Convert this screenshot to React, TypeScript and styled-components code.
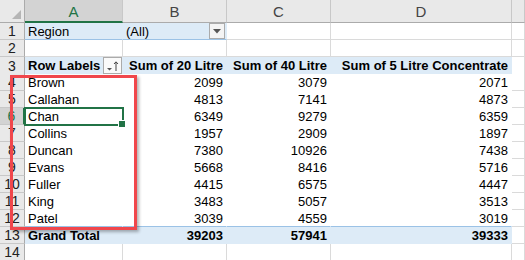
import React from "react";
import styled, { createGlobalStyle, css } from "styled-components";

const GlobalStyle = createGlobalStyle`
  body {
    margin: 0;
    background: #ffffff;
    font-family: "Liberation Sans", Arial, sans-serif;
  }
`;

const COLS = "25px 98px 104px 104px 181px 1fr";
const GRID = "#dadada";
const BLUE_FILL = "#ddebf7";
const BLUE_LINE = "#9bc2e6";
const GREEN = "#217346";

const Sheet = styled.div`
  position: relative;
  width: 525px;
  height: 260px;
  overflow: hidden;
  font-size: 13px;
  color: #000;
`;

const HeaderRow = styled.div`
  display: grid;
  grid-template-columns: ${COLS};
  height: 23px;
`;

const ColHead = styled.div<{ $selected?: boolean; $corner?: boolean }>`
  position: relative;
  box-sizing: border-box;
  display: flex;
  align-items: center;
  justify-content: center;
  background: ${(p) => (p.$selected ? "#d3d3d3" : "#e9e9e9")};
  border-right: 1px solid #c8c8c8;
  border-bottom: ${(p) => (p.$selected ? `2px solid ${GREEN}` : "1px solid #ababab")};
  color: ${(p) => (p.$selected ? GREEN : "#444")};
  font-size: 15px;
  padding-top: 1px;
  ${(p) =>
    p.$corner &&
    css`
      border-right-color: #ababab;
    `}
`;

const CornerMark = styled.svg`
  position: absolute;
  right: 3px;
  bottom: 3px;
`;

const Row = styled.div`
  display: grid;
  grid-template-columns: ${COLS};
  height: 17px;
`;

const RowHead = styled.div<{ $selected?: boolean }>`
  box-sizing: border-box;
  display: flex;
  align-items: center;
  justify-content: center;
  background: ${(p) => (p.$selected ? "#d3d3d3" : "#e9e9e9")};
  border-right: ${(p) => (p.$selected ? `2px solid ${GREEN}` : "1px solid #ababab")};
  border-bottom: 1px solid #c8c8c8;
  color: ${(p) => (p.$selected ? GREEN : "#222")};
  font-size: 14px;
`;

type CellProps = {
  $right?: boolean;
  $bold?: boolean;
  $fill?: boolean;
  $plain?: boolean;
  $blueBottom?: boolean;
  $active?: boolean;
};

const Cell = styled.div<CellProps>`
  position: relative;
  box-sizing: border-box;
  display: flex;
  align-items: center;
  justify-content: ${(p) => (p.$right ? "flex-end" : "space-between")};
  padding: 0 3px 0 3px;
  white-space: nowrap;
  font-weight: ${(p) => (p.$bold ? 700 : 400)};
  background: ${(p) => (p.$fill ? BLUE_FILL : "#fff")};
  border-right: 1px solid ${(p) => (p.$plain || p.$fill ? "transparent" : GRID)};
  border-bottom: 1px solid
    ${(p) => (p.$blueBottom ? BLUE_LINE : p.$plain || p.$fill ? "transparent" : GRID)};
  ${(p) =>
    p.$active &&
    css`
      z-index: 2;
      outline: 2px solid ${GREEN};
      outline-offset: -1px;
      &::after {
        content: "";
        position: absolute;
        right: -4px;
        bottom: -4px;
        width: 6px;
        height: 6px;
        background: ${GREEN};
        border: 1px solid #fff;
      }
    `}
`;

const DropButton = styled.div`
  box-sizing: border-box;
  width: 16px;
  height: 16px;
  margin-right: -2px;
  border: 1px solid #ababab;
  background: #f4f4f4;
  display: flex;
  align-items: center;
  justify-content: center;
`;

const FilterButton = styled(DropButton)`
  width: 19px;
  height: 17px;
  background: #fafafa;
  margin-right: -3px;
`;

const Highlight = styled.div`
  position: absolute;
  left: 10px;
  top: 75px;
  width: 127px;
  height: 155px;
  box-sizing: border-box;
  border: 3px solid #f0474c;
  box-shadow: 2px 2px 3px rgba(0, 0, 0, 0.3);
  z-index: 5;
  pointer-events: none;
`;

const data: [string, number, number, number][] = [
  ["Brown", 2099, 3079, 2071],
  ["Callahan", 4813, 7141, 4873],
  ["Chan", 6349, 9279, 6359],
  ["Collins", 1957, 2909, 1897],
  ["Duncan", 7380, 10926, 7438],
  ["Evans", 5668, 8416, 5716],
  ["Fuller", 4415, 6575, 4447],
  ["King", 3483, 5057, 3513],
  ["Patel", 3039, 4559, 3019],
];

const DownTriangle = () => (
  <svg width="8" height="5" viewBox="0 0 8 5">
    <path d="M0 0h8L4 4.5z" fill="#555" />
  </svg>
);

const SortIcon = () => (
  <svg width="14" height="12" viewBox="0 0 14 12">
    <path d="M1 8h5L3.5 10.5z" fill="#555" />
    <path d="M10 11V2M8 4l2-2.2L12 4" stroke="#444" strokeWidth="1" fill="none" />
  </svg>
);

export default function App() {
  return (
    <Sheet>
      <GlobalStyle />
      <HeaderRow>
        <ColHead $corner>
          <CornerMark width="9" height="9" viewBox="0 0 9 9">
            <path d="M9 0v9H0z" fill="#b5b5b5" />
          </CornerMark>
        </ColHead>
        <ColHead $selected>A</ColHead>
        <ColHead>B</ColHead>
        <ColHead>C</ColHead>
        <ColHead>D</ColHead>
        <ColHead />
      </HeaderRow>

      <Row>
        <RowHead>1</RowHead>
        <Cell $fill $blueBottom>Region</Cell>
        <Cell $fill $blueBottom>
          (All)
          <DropButton>
            <DownTriangle />
          </DropButton>
        </Cell>
        <Cell />
        <Cell />
        <Cell />
      </Row>

      <Row>
        <RowHead>2</RowHead>
        <Cell />
        <Cell />
        <Cell />
        <Cell />
        <Cell />
      </Row>

      <Row>
        <RowHead>3</RowHead>
        <Cell $fill $bold $blueBottom>
          Row Labels
          <FilterButton>
            <SortIcon />
          </FilterButton>
        </Cell>
        <Cell $fill $bold $blueBottom $right>Sum of 20 Litre</Cell>
        <Cell $fill $bold $blueBottom $right>Sum of 40 Litre</Cell>
        <Cell $fill $bold $blueBottom $right>Sum of 5 Litre Concentrate</Cell>
        <Cell />
      </Row>

      {data.map(([name, a, b, c], i) => {
        const last = i === data.length - 1;
        return (
          <Row key={name}>
            <RowHead $selected={i === 2}>{i + 4}</RowHead>
            <Cell $plain $blueBottom={last} $active={i === 2}>{name}</Cell>
            <Cell $plain $blueBottom={last} $right>{a}</Cell>
            <Cell $plain $blueBottom={last} $right>{b}</Cell>
            <Cell $plain $blueBottom={last} $right>{c}</Cell>
            <Cell />
          </Row>
        );
      })}

      <Row>
        <RowHead>13</RowHead>
        <Cell $fill $bold>Grand Total</Cell>
        <Cell $fill $bold $right>39203</Cell>
        <Cell $fill $bold $right>57941</Cell>
        <Cell $fill $bold $right>39333</Cell>
        <Cell />
      </Row>

      <Row>
        <RowHead>14</RowHead>
        <Cell />
        <Cell />
        <Cell />
        <Cell />
        <Cell />
      </Row>

      <Highlight />
    </Sheet>
  );
}
